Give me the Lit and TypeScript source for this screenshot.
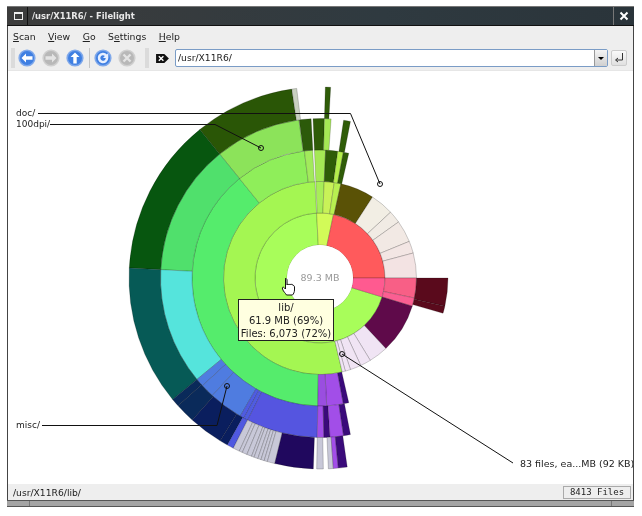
import {LitElement, html, css, svg} from 'lit';
import {customElement} from 'lit/decorators.js';

const CX = 320;
const CY = 278;
const RADII = [33, 65, 96.5, 128, 159.5, 191];

// ring, start angle, end angle (clockwise from north), fill
type Slice = [number, number, number, string];

const SLICES: Slice[] = [
  // ring 0
  [0, 107, 357, '#a8fd5a'],
  [0, 357, 372, '#d2fb58'],
  [0, 12, 90, '#ff5a5c'],
  [0, 90, 107, '#ff5a90'],
  // ring 1
  [1, 166.7, 357, '#a4f652'],
  [1, -2.5, 2.5, '#a8ee58'],
  [1, 2.5, 8.5, '#c8f258'],
  [1, 8.5, 12.5, '#b8f050'],
  [1, 12.5, 33, '#5a5206'],
  [1, 33, 47, '#f2eee4'],
  [1, 47, 54.5, '#f1ebe4'],
  [1, 54.5, 67.7, '#f2e9e4'],
  [1, 67.7, 75, '#f3e6e4'],
  [1, 75, 90, '#f3e3e3'],
  [1, 90, 102, '#f85f86'],
  [1, 102, 107, '#fa5f92'],
  [1, 107, 137, '#5f0a4a'],
  [1, 137, 148.6, '#f0e4f4'],
  [1, 148.6, 155, '#f0e4f4'],
  [1, 155, 161.6, '#f0e4f4'],
  [1, 161.6, 164.8, '#f0e4f4'],
  [1, 164.8, 166.7, '#f0e4f4'],
  // ring 2
  [2, 181, 321, '#55ec6c'],
  [2, 321, 353, '#8fee5a'],
  [2, -7, -3.3, '#a2ea5c'],
  [2, -2.5, 2.5, '#a5e855'],
  [2, 2.5, 8, '#2f5c08'],
  [2, 8, 10.5, '#b4ee4c'],
  [2, 10.5, 13, '#2f5c08'],
  [2, 90, 102.7, '#5a0a1c'],
  [2, 102.7, 106, '#5a0a1c'],
  [2, 169.5, 177, '#a24ee8'],
  [2, 177, 181, '#9a4ee0'],
  [2, 167, 169.5, '#3a0a7a'],
  // ring 3
  [3, 321, 352.4, '#8ce35a'],
  [3, 273, 321, '#50e06c'],
  [3, 230.5, 273, '#55e4dc'],
  [3, 227.5, 230.5, '#4f7ce0'],
  [3, 222.5, 227.5, '#4f7ce0'],
  [3, 210, 222.5, '#4f7ce0'],
  [3, 208.5, 210, '#4f5ce0'],
  [3, 207, 208.5, '#4f5ce0'],
  [3, 181, 207, '#5555e0'],
  [3, -7.5, -3.2, '#2c5a0a'],
  [3, -2.5, 1.6, '#2f5c08'],
  [3, 1.6, 4, '#a5e855'],
  [3, 8.5, 11, '#2f5c08'],
  [3, 178.6, 181, '#a24ee8'],
  [3, 176.4, 178.6, '#3a0a7a'],
  [3, 171.5, 176.4, '#a24ee8'],
  [3, 169, 171.5, '#3a0a7a'],
  // ring 4
  [4, 321, 351.5, '#2a5606'],
  [4, 351.5, 353, '#c8d0c0'],
  [4, 1.6, 3.2, '#2f5c08'],
  [4, 273, 321, '#07560f'],
  [4, 230.5, 273, '#065a56'],
  [4, 228, 230.5, '#0a2a5a'],
  [4, 222, 228, '#0a2a5a'],
  [4, 211.5, 222, '#0a1e5e'],
  [4, 209, 211.5, '#0a1e5e'],
  [4, 207, 209, '#4f58e0'],
  [4, 205, 207, '#c8c8d8'],
  [4, 204, 205, '#c8c8d8'],
  [4, 202.5, 204, '#c8c8d8'],
  [4, 201, 202.5, '#c8c8d8'],
  [4, 200.2, 201, '#c8c8d8'],
  [4, 199, 200.2, '#c8c8d8'],
  [4, 198, 199, '#c8c8d8'],
  [4, 197, 198, '#c8c8d8'],
  [4, 196, 197, '#c8c8d8'],
  [4, 193.7, 196, '#c8c8d8'],
  [4, 182, 193.7, '#20085e'],
  [4, 179, 181, '#c8c8d8'],
  [4, 176, 177.5, '#c8c8d8'],
  [4, 174.5, 176, '#a24ee8'],
  [4, 171.8, 174.5, '#3a0a7a'],
];

function point(r: number, deg: number): string {
  const a = (deg * Math.PI) / 180;
  return `${(CX + r * Math.sin(a)).toFixed(2)} ${(CY - r * Math.cos(a)).toFixed(2)}`;
}

function slicePath([ring, a0, a1]: Slice): string {
  const r0 = RADII[ring];
  const r1 = RADII[ring + 1];
  const large = a1 - a0 > 180 ? 1 : 0;
  return `M${point(r0, a0)}L${point(r1, a0)}A${r1} ${r1} 0 ${large} 1 ${point(r1, a1)}L${point(r0, a1)}A${r0} ${r0} 0 ${large} 0 ${point(r0, a0)}Z`;
}

const roundIcon = (on: boolean, glyph: unknown) => html`
  <svg width="20" height="20" viewBox="0 0 20 20">
    <circle cx="10" cy="10" r="8.6" fill=${on ? '#7fa8ea' : '#cfcfcf'}></circle>
    <circle cx="10" cy="10" r="7" fill=${on ? '#3f7fe2' : '#b8b8b8'}></circle>
    ${glyph}
  </svg>
`;

const LEFT = svg`<path d="M4.500 10l4.500-4.500v2.800h6.500v3.400H9v2.800z" fill="#fff"/>`;
const RIGHT = svg`<path d="M15.500 10L11 5.500v2.800H4.500v3.400H11v2.800z" fill="#e4e4e4"/>`;
const UP = svg`<path d="M10 4.500l4.500 4.500h-2.800v6.500H8.300V9H5.500z" fill="#fff"/>`;
const RELOAD = svg`<path d="M14 6.500A5.300 5.300 0 1 0 15.300 10h-2.600a2.700 2.700 0 1 1-.9-2l-1.800 2h5.300V4.700z" fill="#e8f0ff"/>`;
const STOP = svg`<path d="M6.500 6.500l7 7M13.500 6.500l-7 7" stroke="#e4e4e4" stroke-width="2.400" fill="none"/>`;

@customElement('app-root')
class AppRoot extends LitElement {
  static styles = css`
    :host {
      display: block;
      width: 642px;
      height: 516px;
      background: #fff;
      font-family: 'DejaVu Sans', sans-serif;
      font-size: 10px;
      color: #222;
      overflow: hidden;
    }
    .page {
      padding: 6px 8px 0 7px;
      filter: blur(0.35px);
    }
    .window {
      width: 627px;
      height: 501px;
      box-sizing: border-box;
      border-left: 1px solid #444;
      border-right: 1px solid #444;
      display: flex;
      flex-direction: column;
      background: #eee;
    }
    .title {
      height: 20px;
      margin-left: -1px;
      margin-right: -1px;
      display: flex;
      align-items: center;
      background: linear-gradient(90deg, #3c3c3c, #2f3a40 60%, #2a343a);
      border-top: 1px solid #777;
      border-bottom: 1px solid #111;
      box-sizing: border-box;
      color: #e8e8e8;
      font-weight: bold;
      font-size: 8.4px;
      flex: none;
    }
    .win-btn {
      width: 20px;
      height: 18px;
      display: flex;
      align-items: center;
      justify-content: center;
      flex: none;
    }
    .win-btn.menu {
      border-right: 1px solid #111;
      margin-right: 4px;
      width: 18px;
      margin-left: 2px;
    }
    .win-btn.menu i {
      display: block;
      width: 7px;
      height: 5px;
      border: 1px solid #eee;
      border-top-width: 2px;
    }
    .win-btn.close {
      margin-left: auto;
      border-left: 1px solid #777;
    }
    .title-text {
      white-space: nowrap;
    }
    .menubar {
      height: 20px;
      display: flex;
      align-items: center;
      padding-left: 5px;
      gap: 12.5px;
      font-size: 9.3px;
      flex: none;
    }
    .menubar u {
      text-underline-offset: 1px;
    }
    .toolbar {
      height: 25px;
      display: flex;
      align-items: center;
      padding-left: 3px;
      border-bottom: 1px solid #e6e6e6;
      box-sizing: border-box;
      flex: none;
    }
    .handle {
      width: 4px;
      height: 20px;
      flex: none;
      background-image: radial-gradient(#c4c4c4 0.6px, transparent 0.8px);
      background-size: 2px 2px;
    }
    .tool {
      width: 24px;
      height: 20px;
      flex: none;
      display: flex;
      justify-content: center;
    }
    .sep {
      width: 1px;
      height: 20px;
      margin: 0 1px 0 2px;
      background: #c4c4c4;
      flex: none;
    }
    .handle.second {
      margin: 0 6px 0 6px;
    }
    .clear {
      width: 15px;
      height: 11px;
      flex: none;
      margin-right: 5px;
    }
    .combo {
      width: 433px;
      height: 18px;
      display: flex;
      box-sizing: border-box;
      border: 1px solid #7a9cc6;
      border-radius: 2px;
      background: #fff;
      flex: none;
    }
    .combo-text {
      flex: 1;
      padding-left: 2px;
      line-height: 16px;
      font-size: 9.2px;
    }
    .combo-btn {
      width: 12px;
      background: linear-gradient(#f4f4f4, #d0d0d0);
      border-left: 1px solid #999;
      display: flex;
      align-items: center;
      justify-content: center;
    }
    .combo-btn i {
      border: 3px solid transparent;
      border-top: 3px solid #000;
      border-bottom: 0;
    }
    .go {
      width: 16px;
      height: 16px;
      margin-left: 3px;
      flex: none;
      box-sizing: border-box;
      border: 1px solid #ccc;
      border-radius: 2px;
      background: linear-gradient(#fafafa, #e0e0e0);
    }
    .canvas {
      flex: 1;
      position: relative;
      background: #fff;
      overflow: hidden;
    }
    .canvas > svg {
      display: block;
    }
    .label {
      font-size: 9px;
      fill: #222;
      font-family: 'DejaVu Sans', sans-serif;
    }
    .label.long {
      font-size: 9.5px;
    }
    .center {
      font-size: 9.5px;
      fill: #999;
      font-family: 'DejaVu Sans', sans-serif;
    }
    .tip {
      position: absolute;
      left: 230px;
      top: 228px;
      width: 96px;
      height: 42px;
      box-sizing: border-box;
      border: 1px solid #222;
      background: #ffffe0;
      text-align: center;
      font-size: 10px;
      line-height: 13px;
      padding-top: 1px;
      white-space: nowrap;
    }
    .status {
      height: 16px;
      display: flex;
      align-items: center;
      justify-content: space-between;
      padding: 0 2px 0 5px;
      font-size: 9.2px;
      flex: none;
    }
    .files {
      width: 68px;
      height: 13px;
      box-sizing: border-box;
      border: 1px solid #aaa;
      text-align: center;
      font-family: 'DejaVu Sans Mono', monospace;
      font-size: 9px;
      line-height: 11px;
    }
    .grip {
      margin-left: -1px;
      margin-right: -1px;
      height: 7px;
      box-sizing: border-box;
      flex: none;
      border-top: 1px solid #555;
      border-bottom: 1px solid #555;
      background: #a4a4a4;
      display: flex;
      justify-content: space-between;
      padding: 0 22px;
    }
    .grip i {
      width: 1px;
      background: #777;
    }
  `;

  render() {
    return html`
      <div class="page">
        <div class="window">
          <div class="title">
            <div class="win-btn menu"><i></i></div>
            <span class="title-text">/usr/X11R6/ - Filelight</span>
            <div class="win-btn close">
              <svg width="10" height="10" viewBox="0 0 10 10">
                <path d="M1.5 1.5l7 7M8.5 1.5l-7 7" stroke="#fff" stroke-width="2"></path>
              </svg>
            </div>
          </div>
          <div class="menubar">
            <span><u>S</u>can</span>
            <span><u>V</u>iew</span>
            <span><u>G</u>o</span>
            <span>S<u>e</u>ttings</span>
            <span><u>H</u>elp</span>
          </div>
          <div class="toolbar">
            <div class="handle"></div>
            <div class="tool">${roundIcon(true, LEFT)}</div>
            <div class="tool">${roundIcon(false, RIGHT)}</div>
            <div class="tool">${roundIcon(true, UP)}</div>
            <div class="sep"></div>
            <div class="tool">${roundIcon(true, RELOAD)}</div>
            <div class="tool">${roundIcon(false, STOP)}</div>
            <div class="handle second"></div>
            <svg class="clear" viewBox="0 0 16 12">
              <path d="M1 1h9l5 5-5 5H1z" fill="#111"></path>
              <path d="M4 3.5l5 5M9 3.5l-5 5" stroke="#fff" stroke-width="1.5"></path>
            </svg>
            <div class="combo">
              <div class="combo-text">/usr/X11R6/</div>
              <div class="combo-btn"><i></i></div>
            </div>
            <div class="go">
              <svg width="14" height="14" viewBox="0 0 14 14">
                <path d="M10.500 2v7H4M6 7l-2.500 2L6 11" fill="none" stroke="#333" stroke-width="1"></path>
              </svg>
            </div>
          </div>
          <div class="canvas">
            <svg width="625" height="413" viewBox="8 71 625 413">
              ${SLICES.map(
                (s) => svg`<path d=${slicePath(s)} fill=${s[3]} stroke="rgba(0,0,0,0.28)" stroke-width="0.7"></path>`,
              )}
              <circle cx=${CX} cy=${CY} r="33" fill="#fff"></circle>
              <text class="center" x=${CX} y="281" text-anchor="middle">89.3 MB</text>

              <g fill="none" stroke="#111" stroke-width="1">
                <path d="M38 113.500H350.500L380 184"></path>
                <path d="M50 124.500H215L261 148"></path>
                <path d="M42 425.500H217L227 386"></path>
                <path d="M342 354L513 463"></path>
                <circle cx="380" cy="184" r="2.500"></circle>
                <circle cx="261" cy="148" r="2.500"></circle>
                <circle cx="227" cy="386" r="2.500"></circle>
                <circle cx="342" cy="354" r="2.500"></circle>
              </g>
              <text class="label" x="16" y="116">doc/</text>
              <text class="label" x="16" y="127">100dpi/</text>
              <text class="label" x="16" y="428">misc/</text>
              <text class="label long" x="520" y="467">83 files, ea...MB (92 KB)</text>

              <path
                d="M285 279c1-1 2 0 2 1v5c0-1 2-1 2 0 0-1 2-1 2 0 0-1 2-1 2 .5 1 0 1.500 .5 1.500 1.500v3c0 2-1 4-2 5h-6c-1-2-3-3-4-6-.5-2 .5-2.500 2-1l1 1v-9c0-.500 0-1 .5-1z"
                fill="#fff"
                stroke="#111"
                stroke-width="1"
              ></path>
            </svg>
            <div class="tip">lib/<br />61.9 MB (69%)<br />Files: 6,073 (72%)</div>
          </div>
          <div class="status">
            <span>/usr/X11R6/lib/</span>
            <div class="files">8413 Files</div>
          </div>
          <div class="grip"><i></i><i></i></div>
        </div>
      </div>
    `;
  }
}
